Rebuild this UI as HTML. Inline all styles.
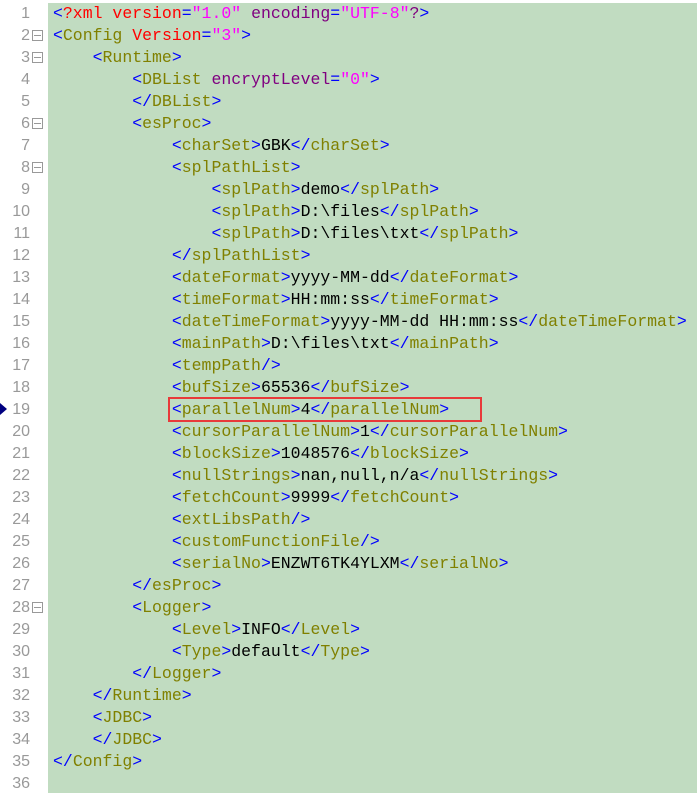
<!DOCTYPE html>
<html><head><meta charset="utf-8"><style>
html,body{margin:0;padding:0;background:#fff;}
body{width:697px;height:793px;position:relative;overflow:hidden;font-family:"Liberation Mono",monospace;font-size:16.5px;}
#g{position:absolute;left:48px;top:3px;right:0;bottom:0;background:#c1dcc1;}
.l{position:absolute;left:53px;height:22px;line-height:22px;white-space:pre;color:#000;}
.n{position:absolute;left:0;width:30px;text-align:right;height:22px;line-height:22px;color:#999;font-family:"Liberation Sans",sans-serif;font-size:16px;}
.f{position:absolute;left:32px;width:11px;height:11px;border:1px solid #999;box-sizing:border-box;}
.f:after{content:"";position:absolute;left:1px;right:1px;top:4px;height:1px;background:#999;}
.b{color:#0000ff}.o{color:#808000}.r{color:#ff0000}.m{color:#ff00ff}.p{color:#800080}
#box{position:absolute;left:168px;top:397px;width:314px;height:25px;border:2px solid #e83a3a;box-sizing:border-box;}
#arr{position:absolute;left:0;top:403px;width:0;height:0;border-top:6px solid transparent;border-bottom:6px solid transparent;border-left:7px solid #000080;}
</style></head><body>
<div id="g"></div>
<div id="lines"></div>
<script>
var L=[
'<span class="b">&lt;</span><span class="r">?xml</span> <span class="r">version</span><span class="b">=</span><span class="m">"1.0"</span> <span class="p">encoding</span><span class="b">=</span><span class="m">"UTF-8"</span><span class="p">?</span><span class="b">&gt;</span>',
'<span class="b">&lt;</span><span class="o">Config</span> <span class="r">Version</span><span class="b">=</span><span class="m">"3"</span><span class="b">&gt;</span>',
'    T(Runtime)',
'        <span class="b">&lt;</span><span class="o">DBList</span> <span class="p">encryptLevel</span><span class="b">=</span><span class="m">"0"</span><span class="b">&gt;</span>',
'        C(DBList)',
'        T(esProc)',
'            E(charSet,GBK)',
'            T(splPathList)',
'                E(splPath,demo)',
'                E(splPath,D:\\files)',
'                E(splPath,D:\\files\\txt)',
'            C(splPathList)',
'            E(dateFormat,yyyy-MM-dd)',
'            E(timeFormat,HH:mm:ss)',
'            E(dateTimeFormat,yyyy-MM-dd HH:mm:ss)',
'            E(mainPath,D:\\files\\txt)',
'            S(tempPath)',
'            E(bufSize,65536)',
'            E(parallelNum,4)',
'            E(cursorParallelNum,1)',
'            E(blockSize,1048576)',
'            E(nullStrings,nan&#44;null&#44;n/a)',
'            E(fetchCount,9999)',
'            S(extLibsPath)',
'            S(customFunctionFile)',
'            E(serialNo,ENZWT6TK4YLXM)',
'        C(esProc)',
'        T(Logger)',
'            E(Level,INFO)',
'            E(Type,default)',
'        C(Logger)',
'    C(Runtime)',
'    T(JDBC)',
'    C(JDBC)',
'C(Config)',
''];
var folds=[2,3,6,8,28];
var h='';
function T(n){return '<span class="b">&lt;</span><span class="o">'+n+'</span><span class="b">&gt;</span>';}
function C(n){return '<span class="b">&lt;/</span><span class="o">'+n+'</span><span class="b">&gt;</span>';}
function S(n){return '<span class="b">&lt;</span><span class="o">'+n+'</span><span class="b">/&gt;</span>';}
for(var i=0;i<L.length;i++){
 var s=L[i].replace(/E\(([^,]+),([^)]*)\)/,function(a,n,v){return T(n)+v+C(n);})
  .replace(/T\(([^)]*)\)/,function(a,n){return T(n);})
  .replace(/C\(([^)]*)\)/,function(a,n){return C(n);})
  .replace(/S\(([^)]*)\)/,function(a,n){return S(n);});
 var y=3+i*22;
 h+='<div class="n" style="top:'+y+'px">'+(i+1)+'</div>';
 if(folds.indexOf(i+1)>=0)h+='<div class="f" style="top:'+(y+5)+'px"></div>';
 h+='<div class="l" style="top:'+y+'px">'+s+'</div>';
}
document.getElementById('lines').innerHTML=h;
</script>
<div id="box"></div>
<div id="arr"></div>
</body></html>
